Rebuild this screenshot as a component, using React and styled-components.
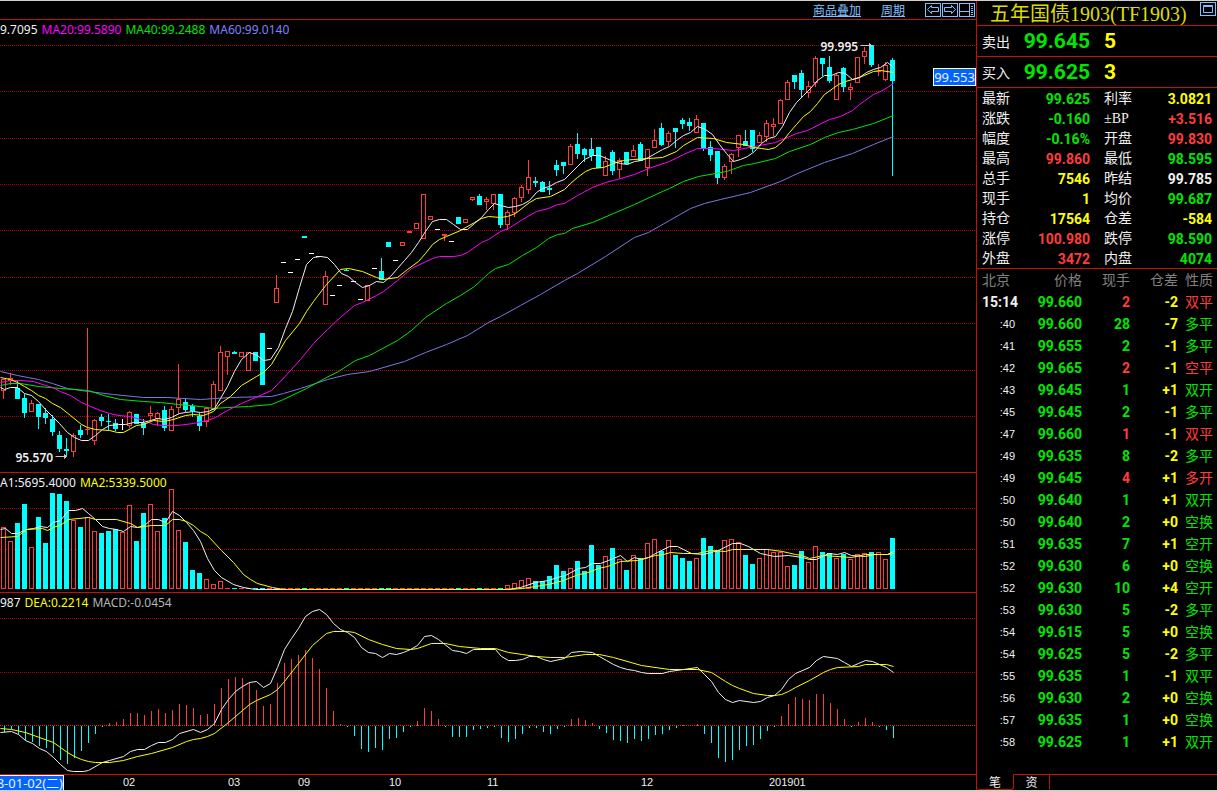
import styled, { createGlobalStyle } from "styled-components";

const RED = "#ff3c3c";
const CYAN = "#00ffff";
const GREEN = "#00e600";
const YELLOW = "#ffff00";
const WHITE = "#f0f0f0";
const LINE = "#c01400";

const GlobalStyle = createGlobalStyle`
  * {
    box-sizing: border-box;
  }

  body {
    margin: 0;
    background-color: #000;
    color: ${WHITE};
    font-family: "Noto Sans", "Noto Sans CJK SC", sans-serif;
    font-size: 12px;
  }

  a {
    color: inherit;
  }

  button {
    padding: 0;
    border: none;
    background: none;
    color: inherit;
    font: inherit;
    cursor: pointer;
  }
`;

const Page = styled.div`
  display: grid;
  grid-template-columns: minmax(0, 1fr) 241px;
  min-height: 100vh;
  border-top: 1px solid #d4d0c8;
  border-bottom: 2px solid #d4d0c8;
`;

const ChartColumn = styled.main`
  display: flex;
  flex-direction: column;
  min-width: 0;
`;

const Toolbar = styled.nav`
  display: flex;
  justify-content: flex-end;
  align-items: center;
  height: 19px;
  padding-right: 1px;
  border-bottom: 1px solid ${LINE};
  color: #80c0ff;
  line-height: 16px;
`;

const ToolLink = styled.a`
  margin-right: 20px;
  font-family: "Noto Sans CJK SC", sans-serif;
`;

const IconGroup = styled.div`
  display: flex;
  gap: 1px;
`;

const IconButton = styled.button`
  display: flex;

  svg {
    display: block;
  }
`;

const Pane = styled.section`
  position: relative;
  display: grid;
  flex: ${(props) => (props.$grow ? "1 0 auto" : "0 0 auto")};
  height: ${(props) => props.$height}px;
  border-bottom: 1px solid ${LINE};
  overflow: hidden;

  & > * {
    grid-area: 1 / 1;
  }
`;

const Legend = styled.div`
  display: flex;
  gap: 4px;
  align-self: start;
  z-index: 1;
  line-height: 20px;
  white-space: nowrap;
`;

const LegendItem = styled.span`
  color: ${(props) => props.$color};
`;

const Canvas = styled.svg`
  display: block;
  width: 100%;
  height: 100%;

  text {
    fill: ${WHITE};
    font-weight: 600;
  }
`;

const PriceTag = styled.output`
  position: absolute;
  top: 48px;
  right: 0;
  width: 43px;
  height: 18px;
  border: 1px solid #fff;
  background-color: #0064ff;
  font-size: 13px;
  line-height: 16px;
  text-align: center;
`;

const Axis = styled.div`
  display: flex;
  height: 15px;
`;

const DateTag = styled.time`
  display: flex;
  flex: none;
  justify-content: flex-end;
  width: 64px;
  height: 15px;
  border-top: 1px solid #fff;
  border-right: 1px solid #fff;
  background-color: #0064ff;
  font-size: 13px;
  line-height: 14px;
  white-space: nowrap;
  overflow: hidden;
`;

const AxisLabels = styled.svg`
  flex: 1;
  min-width: 0;
  height: 15px;
  font-family: "Liberation Sans", sans-serif;
  font-size: 11px;
  fill: ${WHITE};
`;

const QuotePanel = styled.aside`
  display: flex;
  flex-direction: column;
  border-left: 1px solid ${LINE};
  font-family: Roboto, "Noto Sans CJK SC", sans-serif;
  font-size: 14px;
`;

const TitleRow = styled.header`
  display: flex;
  justify-content: space-between;
  align-items: flex-start;
  height: 25px;
  padding: 1px 1px 0 13px;
  border-bottom: 1px solid ${LINE};
`;

const Title = styled.h1`
  margin: 0;
  color: #dcdc00;
  font-family: "Liberation Serif", "Noto Sans CJK SC", serif;
  font-size: 20px;
  font-weight: 400;
  line-height: 24px;
  white-space: nowrap;
`;

const BookRow = styled.div`
  display: grid;
  grid-template-columns: 37px 71px 1fr;
  align-items: center;
  height: 31px;
  padding-left: 5px;
  border-bottom: 1px solid ${LINE};
`;

const Name = styled.span`
  font-family: "Liberation Serif", "Noto Sans CJK SC", sans-serif;
`;

const BookValue = styled.strong`
  color: ${(props) => props.$color};
  font-size: 21px;
  line-height: 30px;
  text-align: right;
`;

const BookSize = styled(BookValue)`
  padding-left: 14px;
  text-align: left;
`;

const Stats = styled.dl`
  display: grid;
  grid-template-columns: 37px 71px 56px 66px;
  grid-auto-rows: 20px;
  margin: 0;
  padding-left: 5px;
  border-bottom: 1px solid ${LINE};
  line-height: 22px;

  dt {
    font-family: "Liberation Serif", "Noto Sans CJK SC", sans-serif;
    white-space: nowrap;
  }

  dt:nth-of-type(even) {
    padding-left: 14px;
  }
`;

const StatValue = styled.dd`
  margin: 0;
  color: ${(props) => props.$color};
  font-weight: 700;
  text-align: right;
`;

const TickTable = styled.table`
  width: 236px;
  border-collapse: collapse;
  table-layout: fixed;
  line-height: 22px;

  th,
  td {
    height: 22px;
    padding: 0;
    text-align: right;
    white-space: nowrap;
  }

  th {
    color: #808080;
    font-weight: 400;
  }

  th:first-child {
    padding-left: 5px;
    text-align: left;
  }
`;

const TimeCell = styled.td`
  padding-right: ${(props) => (props.$full ? 0 : 3)}px !important;
  font-family: ${(props) =>
    props.$full ? "Roboto" : '"Liberation Sans"'}, sans-serif;
  font-size: ${(props) => (props.$full ? 14 : 11)}px;
  font-weight: ${(props) => (props.$full ? 700 : 400)};
`;

const NumberCell = styled.td`
  color: ${(props) => props.$color};
  font-weight: 700;
`;

const KindCell = styled.td`
  color: ${(props) => props.$color};
`;

const Tabs = styled.div`
  display: flex;
  height: 16px;
  margin-top: auto;
`;

const Tab = styled.button`
  width: ${(props) => (props.$active ? 37 : 36)}px;
  border-right: 1px solid ${LINE} !important;
  border-top: 1px solid ${(props) => (props.$active ? "#000" : LINE)} !important;
  border-bottom: 1px solid ${(props) => (props.$active ? LINE : "#000")} !important;
  border-radius: ${(props) => (props.$active ? "0 0 3px 3px" : "0")};
  font-family: "Noto Sans CJK SC", sans-serif !important;
  font-size: 12px !important;
  line-height: 14px !important;
`;

const TabFill = styled.div`
  flex: 1;
  border-top: 1px solid ${LINE};
`;

// u = up, d = down, n = flat: kind, high, body top, body bottom, low
const candles = [
  ["u", 379, 379, 390, 398], ["u", 373, 378, 380, 384], ["d", 380, 388, 398, 398], ["d", 394, 398, 412, 417],
  ["u", 400, 403, 411, 411], ["d", 404, 404, 416, 428], ["d", 408, 413, 417, 423], ["d", 415, 419, 431, 435],
  ["d", 431, 435, 448, 451], ["d", 438, 449, 450, 456], ["u", 433, 435, 451, 456], ["d", 425, 430, 434, 437],
  ["u", 328, 429, 429, 434], ["u", 419, 420, 440, 444], ["d", 414, 417, 420, 425], ["d", 414, 421, 421, 429],
  ["d", 419, 423, 428, 430], ["n", 419, 424, 424, 429], ["u", 411, 412, 425, 427], ["d", 414, 414, 423, 423],
  ["d", 419, 423, 427, 434], ["u", 406, 413, 415, 420], ["u", 412, 413, 418, 425], ["d", 406, 410, 427, 430],
  ["u", 406, 409, 430, 430], ["u", 364, 399, 407, 413], ["d", 399, 402, 409, 411], ["d", 404, 406, 410, 416],
  ["d", 413, 416, 425, 430], ["u", 407, 408, 421, 426], ["u", 381, 384, 409, 409], ["u", 346, 352, 390, 390],
  ["u", 351, 351, 356, 374], ["d", 351, 352, 353, 353], ["u", 352, 352, 356, 356], ["u", 352, 352, 370, 370],
  ["d", 352, 352, 360, 360], ["d", 333, 333, 384, 384], ["n", 348, 348, 348, 348], ["u", 275, 288, 302, 302],
  ["n", 262, 262, 262, 262], ["n", 272, 272, 272, 272], ["n", 259, 259, 259, 259], ["d", 236, 236, 237, 237],
  ["n", 253, 253, 253, 253], ["n", 256, 256, 256, 256], ["u", 271, 276, 304, 304], ["n", 295, 295, 295, 295],
  ["n", 285, 285, 285, 285], ["d", 269, 270, 270, 270], ["n", 281, 281, 281, 281], ["n", 299, 299, 299, 299],
  ["u", 285, 285, 300, 300], ["n", 268, 268, 268, 268], ["d", 258, 271, 279, 279], ["d", 242, 242, 246, 246],
  ["n", 260, 260, 260, 260], ["u", 242, 242, 245, 245], ["u", 231, 231, 232, 232], ["u", 223, 223, 228, 228],
  ["u", 194, 194, 238, 238], ["u", 216, 216, 219, 219], ["n", 229, 229, 229, 229], ["u", 234, 234, 235, 240],
  ["n", 241, 241, 241, 241], ["d", 217, 217, 223, 223], ["u", 219, 219, 222, 222], ["u", 197, 197, 199, 200],
  ["d", 194, 196, 204, 204], ["u", 197, 199, 201, 209], ["u", 194, 194, 203, 209], ["d", 194, 194, 224, 227],
  ["u", 210, 212, 224, 229], ["u", 197, 198, 212, 216], ["u", 185, 187, 197, 201], ["u", 160, 177, 189, 193],
  ["d", 177, 181, 182, 186], ["d", 181, 182, 191, 191], ["d", 181, 188, 189, 194], ["d", 160, 165, 169, 175],
  ["d", 162, 162, 165, 173], ["u", 144, 146, 164, 164], ["d", 133, 144, 153, 158], ["d", 148, 149, 154, 161],
  ["d", 138, 149, 155, 160], ["d", 147, 147, 167, 167], ["u", 156, 161, 175, 175], ["d", 150, 152, 170, 174],
  ["u", 158, 160, 169, 177], ["d", 152, 152, 163, 163], ["u", 145, 150, 156, 156], ["d", 142, 144, 160, 160],
  ["u", 149, 149, 167, 175], ["u", 129, 140, 147, 147], ["d", 123, 128, 144, 145], ["u", 131, 133, 141, 145],
  ["d", 128, 128, 131, 147], ["d", 118, 120, 123, 128], ["d", 118, 122, 125, 130], ["u", 115, 119, 132, 132],
  ["d", 123, 123, 147, 150], ["d", 141, 147, 154, 160], ["d", 151, 151, 177, 183], ["u", 164, 166, 177, 179],
  ["u", 153, 154, 161, 173], ["u", 135, 135, 147, 156], ["d", 130, 141, 145, 145], ["d", 130, 130, 148, 151],
  ["u", 132, 135, 142, 142], ["u", 120, 123, 136, 141], ["u", 118, 124, 126, 135], ["u", 99, 100, 123, 123],
  ["u", 80, 82, 99, 99], ["d", 75, 75, 81, 88], ["d", 70, 73, 89, 97], ["u", 81, 86, 92, 97],
  ["u", 56, 58, 82, 86], ["d", 58, 58, 63, 75], ["d", 56, 67, 80, 82], ["u", 73, 75, 99, 99],
  ["d", 67, 68, 86, 91], ["u", 83, 87, 89, 99], ["u", 57, 57, 82, 82], ["u", 47, 51, 56, 63],
  ["d", 45, 45, 64, 66], ["u", 64, 71, 71, 75], ["u", 62, 65, 79, 80], ["d", 58, 60, 80, 175],
];

const volumeHead = [
  527, 541, 523, 504, 547, 517, 543, 493, 494, 501, 520, 527, 517, 531, 533, 531,
  529, 532, 505, 541, 513, 504, 531, 518, 489, 530, 542, 570, 573, 579, 584, 581,
];
const volumeTail = [
  585, 583, 580, 578, 581, 581, 576, 565, 571, 568, 561, 571, 545, 565, 556, 548,
  559, 570, 555, 558, 543, 539, 551, 540, 555, 558, 561, 558, 538, 546, 550, 540,
  539, 542, 555, 564, 558, 549, 552, 552, 566, 565, 551, 562, 546, 552, 553, 558,
  554, 559, 554, 553, 552, 552, 559, 538,
];
const volumes = [...volumeHead, ...Array(40).fill(588), ...volumeTail];

const macdBars = [
  731, 728, 733, 739, 741, 745, 747, 752, 759, 763, 757, 750, 742, 733, 726, 722,
  721, 718, 712, 712, 714, 710, 708, 712, 709, 703, 704, 707, 714, 713, 703, 687,
  678, 676, 677, 681, 689, 705, 703, 682, 662, 658, 654, 649, 657, 668, 687, 710,
  723, 726, 735, 748, 751, 747, 749, 738, 737, 731, 726, 720, 707, 710, 718, 726,
  736, 736, 736, 729, 728, 727, 726, 737, 741, 738, 733, 727, 727, 731, 733, 728,
  726, 718, 717, 719, 722, 728, 732, 739, 740, 742, 738, 740, 738, 734, 733, 729,
  727, 724, 724, 723, 733, 742, 757, 761, 759, 749, 745, 744, 738, 730, 726, 715,
  703, 696, 698, 699, 693, 693, 702, 708, 718, 726, 721, 717, 721, 726, 729, 737,
];

const priceLines = [
  {
    color: "#7878e6",
    points:
      "0,371 17,375 38,379 52,383 67,388 88,391 113,394 143,397 167,397 200,399 230,397 271,396 283,393 300,388 327,379 347,374 369,371 404,361 425,352 446,344 467,335 488,322 500,316 520,305 540,294 564,280 577,273 605,256 634,237 648,232 669,220 690,208 704,203 720,199 750,192 780,181 797,173 824,162 852,153 873,144 893,136",
  },
  {
    color: "#00e600",
    points:
      "0,385 10,383 20,383 38,386 60,388 88,390 103,395 120,399 143,401 160,402 178,404 200,406 213,408 227,407 248,406 271,404 283,399 306,388 326,377 338,371 355,360 369,355 397,340 411,330 425,317 446,303 460,295 474,286 488,273 495,268 508,264 522,255 536,247 548,238 557,234 564,233 572,228 592,222 613,213 634,204 662,191 669,188 683,181 698,176 726,171 743,165 754,163 775,158 789,151 810,144 824,137 838,132 852,129 873,123 893,115",
  },
  {
    color: "#ff00ff",
    points:
      "0,382 10,380 20,380 33,381 45,385 52,387 60,391 70,395 81,402 90,406 100,410 109,413 118,415 130,416 143,420 153,424 163,425 177,425 193,423 207,420 215,417 227,410 241,403 255,397 271,390 278,383 290,370 300,359 313,343 327,329 341,316 354,305 362,302 376,295 383,291 397,280 411,268 432,258 439,256 453,256 460,255 467,252 481,242 488,239 500,231 508,228 522,219 536,211 548,208 557,204 564,203 577,195 592,187 605,182 613,180 634,174 648,168 669,161 683,154 697,148 712,148 733,150 754,146 775,142 796,133 807,130 829,119 840,116 852,110 859,104 873,94 880,91 887,87 893,83",
  },
  {
    color: "#ffff00",
    points:
      "0,377 10,379 17,382 24,386 31,390 38,395 45,398 52,403 60,407 70,415 81,424 87,427 95,429 109,430 117,432 123,432 136,425 143,424 153,420 163,421 173,419 185,415 193,414 203,415 213,411 220,403 230,396 241,385 256,376 263,372 271,364 278,352 285,340 299,323 306,311 313,301 326,284 340,269 348,268 362,271 376,277 383,279 397,277 407,269 418,261 425,253 432,244 439,239 446,236 460,230 474,222 481,218 488,216 500,217 507,216 515,213 529,202 536,198 550,196 564,189 570,183 577,177 585,171 592,168 603,167 613,163 623,160 633,159 648,158 662,157 676,151 683,145 697,137 713,138 726,142 743,144 754,147 761,148 768,149 775,147 782,141 789,132 796,124 803,116 810,111 817,103 824,94 838,84 845,81 859,77 873,71 880,70 893,72",
  },
  {
    color: "#f0f0f0",
    points:
      "0,387 4,389 10,387 17,387 24,393 31,395 38,401 45,409 52,416 59,423 67,432 74,437 81,440 88,440 95,435 102,429 109,425 118,424 125,424 133,422 143,422 150,420 157,418 164,419 171,417 179,413 185,412 193,411 200,412 208,411 214,408 220,398 227,386 234,371 241,359 249,352 257,355 263,360 270,359 278,347 285,328 292,311 299,287 306,264 313,257 320,256 327,257 334,264 341,273 348,276 355,282 362,287 369,285 376,281 383,282 390,276 397,268 404,260 411,252 418,242 425,231 432,221 439,219 446,219 453,224 460,229 467,229 474,223 481,217 488,209 494,203 500,205 508,207 515,206 522,204 529,200 536,192 542,188 549,186 556,182 564,179 570,173 577,166 584,159 592,155 599,155 606,158 613,161 620,163 627,164 634,161 641,160 648,157 655,153 662,149 669,146 676,140 683,135 690,132 697,126 705,129 712,134 719,144 726,153 733,161 740,159 747,156 754,151 761,143 768,138 775,136 782,126 789,112 796,102 803,95 810,88 817,80 824,75 831,75 838,72 845,73 852,79 859,77 866,72 873,69 880,67 887,62 893,67",
  },
];

const volumeLines = [
  {
    color: "#f0f0f0",
    points:
      "0,529 5,528 11,533 17,533 26,529 33,528 40,526 47,527 53,522 60,520 68,510 75,510 82,508 88,513 95,519 102,526 109,528 116,529 123,531 130,526 137,527 144,525 151,519 158,519 165,522 172,511 179,515 186,522 193,530 200,541 207,558 214,570 221,577 233,584 243,587 255,589 507,589 520,587 535,582 548,580 557,577 565,575 578,568 585,567 592,563 600,563 608,560 620,555 627,561 634,557 641,559 648,557 657,552 669,546 677,546 683,549 691,553 703,554 718,550 732,543 740,543 748,546 760,553 774,556 788,555 802,557 809,559 816,559 828,553 837,554 844,552 851,555 865,556 873,554 887,554 893,551",
  },
  {
    color: "#ffff00",
    points:
      "0,537 17,536 26,529 42,528 47,530 53,527 61,524 68,519 88,517 95,519 116,519 130,523 137,527 151,525 165,525 172,519 179,519 186,521 193,525 200,531 207,535 221,550 233,562 243,574 250,579 257,583 272,587 283,589 508,589 522,588 548,584 563,580 578,574 585,573 598,568 607,566 620,561 637,560 648,557 655,555 663,554 670,552 683,553 697,553 710,550 725,551 732,549 740,549 767,549 782,551 795,554 802,555 809,558 823,555 851,557 865,554 887,554 893,553",
  },
];

const macdLines = [
  {
    color: "#f0f0f0",
    points:
      "0,732 11,731 18,734 25,740 32,743 39,748 46,751 53,757 60,764 67,770 73,771 83,771 88,770 102,762 109,760 123,756 130,751 137,749 144,749 151,745 158,742 165,742 172,739 179,733 193,729 200,732 207,729 214,723 221,709 228,699 235,691 242,686 249,682 256,681 263,687 270,683 277,667 284,649 291,638 298,628 305,616 312,611 319,609 326,614 333,623 340,629 347,632 354,637 361,647 368,652 375,653 382,657 389,653 396,654 403,652 410,649 417,645 424,636 431,635 438,639 452,650 459,651 466,653 473,649 495,649 501,656 508,660 515,660 522,659 529,656 536,656 543,659 550,661 564,658 571,652 580,651 592,652 599,656 606,660 613,664 620,667 627,669 634,670 641,672 648,673 662,673 669,671 683,669 697,667 704,674 711,681 718,692 725,699 732,702 739,700 753,702 760,701 767,697 774,695 781,689 788,679 795,673 809,667 816,660 823,656 837,658 844,662 851,666 858,663 865,660 872,661 879,664 886,667 893,672",
  },
  {
    color: "#ffff00",
    points:
      "0,728 11,729 25,732 39,737 53,742 67,752 74,756 81,759 88,761 95,762 109,762 123,760 137,756 151,753 172,747 186,741 193,739 200,738 207,736 214,733 228,722 242,710 249,704 256,700 270,694 277,689 284,681 298,663 312,645 319,639 326,633 333,631 347,631 354,632 368,639 382,644 396,648 410,649 417,648 431,643 445,643 459,646 480,648 495,648 508,652 522,654 536,656 550,657 564,657 585,654 599,654 613,657 641,665 669,669 697,669 711,672 725,681 732,685 739,688 753,693 767,695 774,695 781,694 788,691 795,687 809,680 823,672 830,669 837,667 858,666 865,664 886,664 893,666",
  },
];

const months = [
  [123, "02"],
  [228, "03"],
  [298, "09"],
  [389, "10"],
  [487, "11"],
  [641, "12"],
  [769, "201901"],
];

const stats = [
  ["最新", "99.625", GREEN],
  ["利率", "3.0821", YELLOW],
  ["涨跌", "-0.160", GREEN],
  ["±BP", "+3.516", RED],
  ["幅度", "-0.16%", GREEN],
  ["开盘", "99.830", RED],
  ["最高", "99.860", RED],
  ["最低", "98.595", GREEN],
  ["总手", "7546", YELLOW],
  ["昨结", "99.785", WHITE],
  ["现手", "1", YELLOW],
  ["均价", "99.687", GREEN],
  ["持仓", "17564", YELLOW],
  ["仓差", "-584", YELLOW],
  ["涨停", "100.980", RED],
  ["跌停", "98.590", GREEN],
  ["外盘", "3472", RED],
  ["内盘", "4074", GREEN],
];

const ticks = [
  ["15:14", "99.660", 2, "-2", "双平", RED],
  [":40", "99.660", 28, "-7", "多平", GREEN],
  [":41", "99.655", 2, "-1", "多平", GREEN],
  [":42", "99.665", 2, "-1", "空平", RED],
  [":43", "99.645", 1, "+1", "双开", GREEN],
  [":45", "99.645", 2, "-1", "多平", GREEN],
  [":47", "99.660", 1, "-1", "双平", RED],
  [":49", "99.635", 8, "-2", "多平", GREEN],
  [":49", "99.645", 4, "+1", "多开", RED],
  [":50", "99.640", 1, "+1", "双开", GREEN],
  [":50", "99.640", 2, "+0", "空换", GREEN],
  [":51", "99.635", 7, "+1", "空开", GREEN],
  [":52", "99.630", 6, "+0", "空换", GREEN],
  [":52", "99.630", 10, "+4", "空开", GREEN],
  [":53", "99.630", 5, "-2", "多平", GREEN],
  [":54", "99.615", 5, "+0", "空换", GREEN],
  [":54", "99.625", 5, "-2", "多平", GREEN],
  [":55", "99.635", 1, "-1", "双平", GREEN],
  [":56", "99.630", 2, "+0", "空换", GREEN],
  [":57", "99.635", 1, "+0", "空换", GREEN],
  [":58", "99.625", 1, "+1", "双开", GREEN],
];

const STEP = 7;
const kindColor = { u: RED, d: CYAN, n: "#ffffff" };

const boxPath = (x, top, bottom) =>
  top === bottom
    ? `M${x - 2.5} ${top}H${x + 2.5}`
    : `M${x - 2} ${top}H${x + 2}V${bottom}H${x - 2}Z`;

const GridLines = ({ rows, color = "#b40000" }) =>
  rows.map((y) => (
    <line
      key={y}
      x1="-0.5"
      x2="100%"
      y1={y}
      y2={y}
      stroke={color}
      strokeDasharray="1 1"
    />
  ));

const Curves = ({ lines }) =>
  lines.map((line) => (
    <polyline
      key={line.color}
      points={line.points}
      fill="none"
      stroke={line.color}
    />
  ));

const PriceChart = () => (
  <Canvas role="img" aria-label="K线">
    <g transform="translate(0.5 -19.5)">
      <GridLines rows={[45, 91, 138, 184, 230, 277, 323, 370, 416]} />
      <g shapeRendering="crispEdges">
        {candles.map(([kind, high, top, bottom, low], i) => {
          const x = 3 + i * STEP;
          return (
            <g key={i} stroke={kindColor[kind]}>
              {low > high && <path d={`M${x} ${high - 0.5}V${low + 0.5}`} />}
              <path
                d={boxPath(x, top, bottom)}
                fill={kind === "d" ? CYAN : "#000"}
              />
            </g>
          );
        })}
      </g>
      <Curves lines={priceLines} />
      <g stroke="#c8c8c8" fill="#c8c8c8">
        <path d="M55 456H66M64 454L66 456L64 458Z" />
        <path d="M860 45H871M869 43L871 45L869 47Z" />
      </g>
      <text x="15" y="461">95.570</text>
      <text x="820" y="50">99.995</text>
    </g>
  </Canvas>
);

const VolumeChart = () => (
  <Canvas role="img" aria-label="成交量">
    <g transform="translate(0.5 -472.5)">
      <GridLines rows={[508, 549]} />
      <g shapeRendering="crispEdges">
        {volumes.map((top, i) => {
          const down = candles[i][0] === "d";
          return (
            <path
              key={i}
              d={boxPath(3 + i * STEP, top, 588)}
              stroke={down ? CYAN : RED}
              fill={down ? CYAN : "#000"}
            />
          );
        })}
      </g>
      <Curves lines={volumeLines} />
    </g>
  </Canvas>
);

const MacdChart = () => (
  <Canvas role="img" aria-label="MACD">
    <g transform="translate(0.5 -592.5)">
      <GridLines rows={[618, 672]} />
      <GridLines rows={[725]} color="#d03030" />
      <g shapeRendering="crispEdges">
        {macdBars.map((y, i) => (
          <path
            key={i}
            d={`M${4 + i * STEP} 725V${y}`}
            stroke={y > 725 ? CYAN : RED}
          />
        ))}
      </g>
      <Curves lines={macdLines} />
    </g>
  </Canvas>
);

const BoxIcon = ({ children }) => (
  <svg width="16" height="15" fill="none" stroke="#80c0ff">
    <rect x="0.5" y="0.5" width="15" height="13" />
    {children}
  </svg>
);

const App = () => (
  <>
    <GlobalStyle />
    <Page>
      <ChartColumn>
        <Toolbar>
          <ToolLink href="#overlay">商品叠加</ToolLink>
          <ToolLink href="#period">周期</ToolLink>
          <IconGroup>
            <IconButton aria-label="向左">
              <BoxIcon>
                <path d="M2.5 6.5L6.5 2.5V4.5H13.5V8.5H6.5V10.5Z" />
              </BoxIcon>
            </IconButton>
            <IconButton aria-label="向右">
              <BoxIcon>
                <path d="M13.5 6.5L9.5 2.5V4.5H2.5V8.5H9.5V10.5Z" />
              </BoxIcon>
            </IconButton>
            <IconButton aria-label="布局">
              <BoxIcon>
                <path d="M10.5 1V13M1 8.5H10M12 3.5H14M12 5.5H14M12 7.5H14M12 9.5H14M12 11.5H14" />
              </BoxIcon>
            </IconButton>
          </IconGroup>
        </Toolbar>

        <Pane $height={453}>
          <Legend>
            <LegendItem $color={WHITE}>9.7095</LegendItem>
            <LegendItem $color="#ff00ff">MA20:99.5890</LegendItem>
            <LegendItem $color={GREEN}>MA40:99.2488</LegendItem>
            <LegendItem $color="#8080ff">MA60:99.0140</LegendItem>
          </Legend>
          <PriceChart />
          <PriceTag>99.553</PriceTag>
        </Pane>

        <Pane $height={120}>
          <Legend>
            <LegendItem $color={WHITE}>A1:5695.4000</LegendItem>
            <LegendItem $color={YELLOW}>MA2:5339.5000</LegendItem>
          </Legend>
          <VolumeChart />
        </Pane>

        <Pane $height={182} $grow>
          <Legend>
            <LegendItem $color={WHITE}>987</LegendItem>
            <LegendItem $color={YELLOW}>DEA:0.2214</LegendItem>
            <LegendItem $color="#b4b4b4">MACD:-0.0454</LegendItem>
          </Legend>
          <MacdChart />
        </Pane>

        <Axis>
          <DateTag>8-01-02(二)</DateTag>
          <AxisLabels>
            {months.map(([x, label]) => (
              <text key={label} x={x - 64} y="11">
                {label}
              </text>
            ))}
          </AxisLabels>
        </Axis>
      </ChartColumn>

      <QuotePanel>
        <TitleRow>
          <Title>五年国债1903(TF1903)</Title>
          <IconButton aria-label="窗口">
            <BoxIcon>
              <path d="M3.5 3.5H12.5V10.5H3.5ZM3.5 4.5H12.5" />
            </BoxIcon>
          </IconButton>
        </TitleRow>
        <BookRow>
          <Name>卖出</Name>
          <BookValue $color={GREEN}>99.645</BookValue>
          <BookSize $color={YELLOW}>5</BookSize>
        </BookRow>
        <BookRow>
          <Name>买入</Name>
          <BookValue $color={GREEN}>99.625</BookValue>
          <BookSize $color={YELLOW}>3</BookSize>
        </BookRow>
        <Stats>
          {stats.map(([label, value, color]) => [
            <dt key={label}>{label}</dt>,
            <StatValue key={label + value} $color={color}>
              {value}
            </StatValue>,
          ])}
        </Stats>
        <TickTable>
          <colgroup>
            <col width="41" />
            <col width="64" />
            <col width="48" />
            <col width="48" />
            <col width="35" />
          </colgroup>
          <thead>
            <tr>
              <th>北京</th>
              <th>价格</th>
              <th>现手</th>
              <th>仓差</th>
              <th>性质</th>
            </tr>
          </thead>
          <tbody>
            {ticks.map(([time, price, size, diff, kind, color], i) => (
              <tr key={i}>
                <TimeCell $full={i === 0}>{time}</TimeCell>
                <NumberCell $color={GREEN}>{price}</NumberCell>
                <NumberCell $color={color}>{size}</NumberCell>
                <NumberCell $color={YELLOW}>{diff}</NumberCell>
                <KindCell $color={color}>{kind}</KindCell>
              </tr>
            ))}
          </tbody>
        </TickTable>
        <Tabs>
          <Tab $active>笔</Tab>
          <Tab>资</Tab>
          <TabFill />
        </Tabs>
      </QuotePanel>
    </Page>
  </>
);

export default App;
